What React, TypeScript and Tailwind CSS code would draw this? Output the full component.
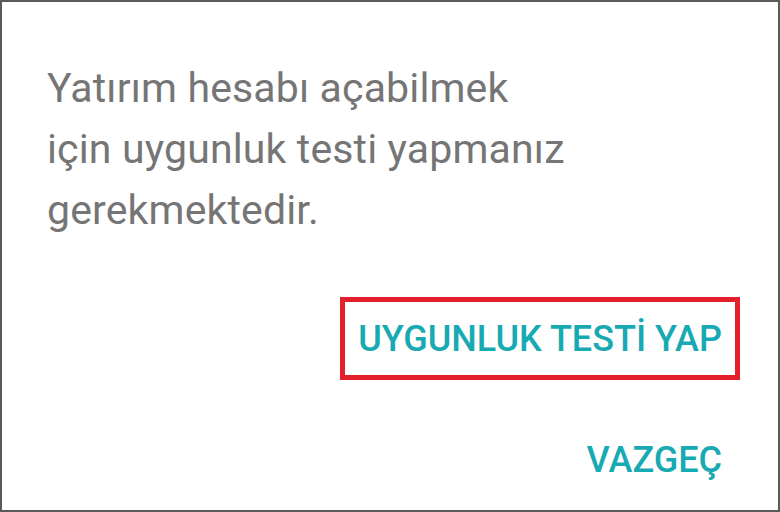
export default function App() {
  return (
    <div className="w-[780px] h-[512px] bg-white border-2 border-[#5a5a5a] flex flex-col" style={{ fontFamily: 'Roboto, "Noto Sans", sans-serif' }}>
      {/* Message */}
      <p className="pl-[45px] pt-[56px] text-[41px] leading-[61px] text-[#757575] tracking-[0.15px]">
        Yatırım hesabı açabilmek
        <br />
        için uygunluk testi yapmanız
        <br />
        gerekmektedir.
      </p>

      {/* Actions */}
      <div className="flex flex-col items-end pr-[38px] mt-[56px]">
        <div className="border-[5px] border-[#e3202c] w-[400px] h-[83px] flex items-center justify-center">
          <span className="text-[36px] leading-[42px] font-medium text-[#17aab3]">UYGUNLUK TESTİ YAP</span>
        </div>
        <span className="mt-[59px] mr-[18px] text-[36px] leading-[42px] font-medium text-[#17aab3]">VAZGEÇ</span>
      </div>
    </div>
  );
}
